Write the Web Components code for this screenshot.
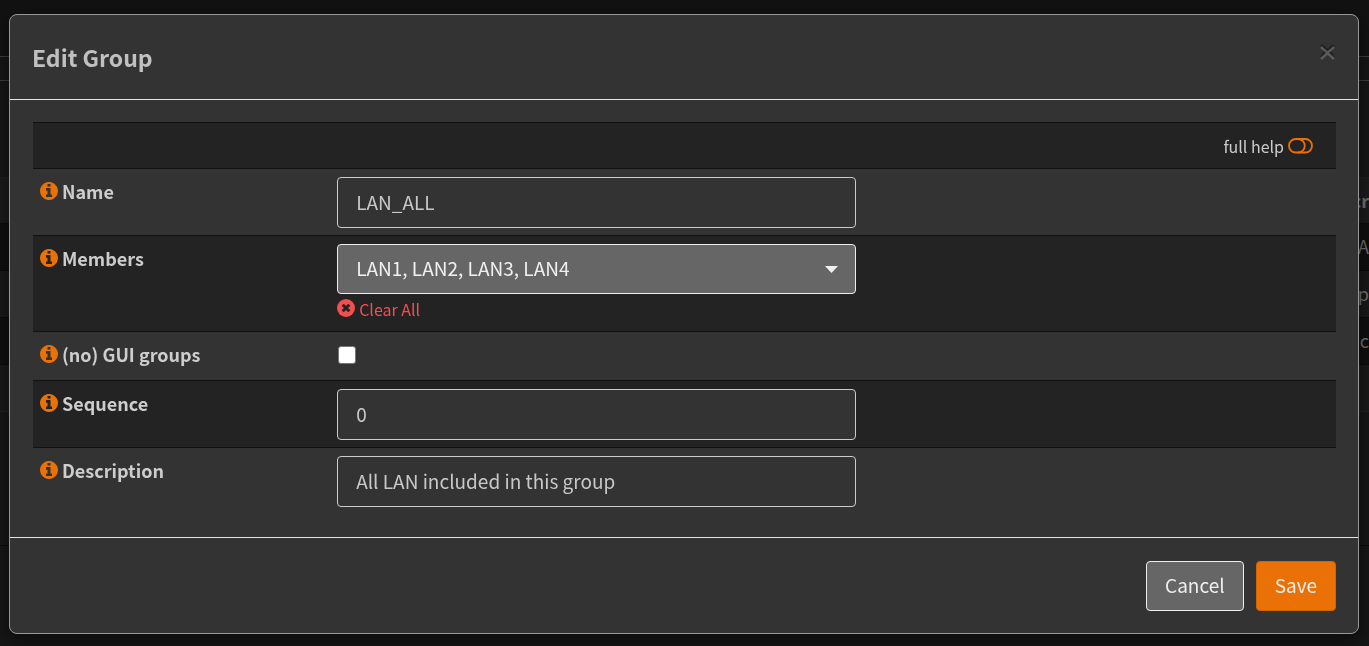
<!DOCTYPE html>
<html lang="en">
<head>
<meta charset="utf-8">
<meta name="viewport" content="width=device-width, initial-scale=1">
<title>Edit Group</title>
<style>
  body {
    margin: 0;
    min-height: 100vh;
    background: #151515;
    color: #cdcdcd;
    font: 18px/24px "Noto Sans CJK SC", "Noto Sans", sans-serif;
  }
</style>
</head>
<body>
<group-list-page></group-list-page>
<modal-dialog heading="Edit Group">
  <form-table>
    <help-row></help-row>
    <form-row label="Name"><text-field name="Name" value="LAN_ALL"></text-field></form-row>
    <form-row label="Members" shaded>
      <member-picker name="Members" value="LAN1, LAN2, LAN3, LAN4"></member-picker>
    </form-row>
    <form-row label="(no) GUI groups"><check-field name="(no) GUI groups"></check-field></form-row>
    <form-row label="Sequence" shaded><text-field name="Sequence" value="0"></text-field></form-row>
    <form-row label="Description"><text-field name="Description" value="All LAN included in this group"></text-field></form-row>
  </form-table>
  <action-button slot="actions">Cancel</action-button>
  <action-button slot="actions" primary>Save</action-button>
</modal-dialog>

<script>
const define = (name, render) => customElements.define(name, class extends HTMLElement {
  connectedCallback() {
    if (this.shadowRoot) return;
    this.attachShadow({ mode: 'open' }).innerHTML = render(this);
  }
});

/* Dimmed list page that stays behind the dialog */
define('group-list-page', () => `
  <style>
    :host { position: fixed; inset: 0; z-index: -1; overflow: hidden; display: block; color: #6f6f6f; background: #161616; }
    div { box-sizing: border-box; border-top: 1px solid #0a0a0a; text-align: right; }
    .top { height: 56px; border: 0; background: #121212; }
    .bar { height: 24px; border-color: #3c3c3c; }
    .title { height: 97px; border-color: #3c3c3c; }
    .head { height: 46px; border-color: #202020; background: #1b1b1b; font-weight: 700; line-height: 44px; }
    .row { height: 47px; line-height: 44px; }
    .odd { background: #0f0f0f; }
    .even { background: #191919; }
    .rest { height: 134px; border-color: #202020; }
    .foot { height: 100px; }
  </style>
  <div class="top"></div><div class="bar"></div><div class="title"></div>
  <div class="head">cr</div>
  <div class="row odd">A</div><div class="row even">p</div><div class="row odd">c</div>
  <div class="row even"></div><div class="rest"></div><div class="foot"></div>`);

define('modal-dialog', el => `
  <style>
    :host { display: block; padding: 14px 10px 12px 9px; }
    section { border: 1px solid #999; border-radius: 8px; background: #333; box-shadow: 0 6px 18px rgba(0,0,0,.5); }
    header { display: flex; justify-content: space-between; align-items: flex-start; padding: 21px 22px 21px; border-bottom: 1px solid #e5e5e5; }
    h1 { margin: 0; font-size: 23px; line-height: 42px; font-weight: 700; color: #c0c0c0; }
    .close { border: 0; padding: 0; margin: 7px 0 0; width: 18px; height: 20px; background: none; cursor: pointer; }
    svg { display: block; }
    main { padding: 22px 22px 23px 23px; }
    footer { display: flex; justify-content: flex-end; gap: 12px; padding: 23px 22px 22px; border-top: 1px solid #e5e5e5; }
  </style>
  <section role="dialog" aria-label="${el.getAttribute('heading')}">
    <header><h1>${el.getAttribute('heading')}</h1>
      <button class="close" aria-label="Close"><svg width="18" height="20" fill="none">
        <path d="M3 2l13 13M16 2L3 15" stroke="#202020" stroke-width="3"/><path d="M3 4l6.500 5.500L16 4M3 16l6.500-6 6.500 6" stroke="#5c5c5c" stroke-width="2.500"/><path d="M5 3l4.500 4L14 3M4 12l3-3M15 12l-3-3" stroke="#222" stroke-width="2"/></svg></button>
    </header>
    <main><slot></slot></main>
    <footer><slot name="actions"></slot></footer>
  </section>`);

define('form-table', () => `<style>:host { display: block; }</style><slot></slot>`);

define('help-row', () => `
  <style>
    :host { display: flex; justify-content: flex-end; border-top: 1px solid #111; background: #232323; padding: 11px 23px 10px; }
    a { display: flex; align-items: center; gap: 4px; color: #cdcdcd; font-size: 16px; line-height: 24px; text-decoration: none; }
  </style>
  <a href="#">full help <svg width="25" height="17" fill="none" stroke="#ea7105" stroke-width="1.800"><rect x="1" y="1" width="23" height="13.500" rx="6.750"/><path d="M10 1a6.750 6.750 0 0 1 0 13.500"/></svg></a>`);

define('form-row', el => `
  <style>
    :host { display: grid; grid-template-columns: minmax(0,5fr) minmax(0,9fr) minmax(0,8fr); border-top: 1px solid #111; }
    :host([shaded]) { background: #232323; }
    .label { display: flex; align-items: flex-start; gap: 4px; padding: 10px 7px; color: #cdcdcd; font-weight: 700; }
    a { display: block; padding-top: 3px; }
    svg { display: block; }
    .control { padding: 8px 6px 7px 8px; }
  </style>
  <div class="label"><a href="#" aria-label="Help"><svg width="18" height="18" viewBox="0 0 1536 1536"><path fill="#ea7105" d="M1024 1248v-160q0-14-9-23t-23-9h-96V544q0-14-9-23t-23-9H544q-14 0-23 9t-9 23v160q0 14 9 23t23 9h96v320h-96q-14 0-23 9t-9 23v160q0 14 9 23t23 9h448q14 0 23-9t9-23zM896 352V192q0-14-9-23t-23-9H672q-14 0-23 9t-9 23v160q0 14 9 23t23 9h192q14 0 23-9t9-23zm640 416q0 209-103 385.500T1153.500 1433 768 1536t-385.500-103T103 1153.500 0 768t103-385.500T382.500 103 768 0t385.500 103T1433 382.500 1536 768z"/></svg></a><span>${el.getAttribute('label')}</span></div>
  <div class="control"><slot></slot></div>`);

define('text-field', el => `
  <style>
    :host { display: block; }
    input { display: block; box-sizing: border-box; width: 100%; height: 51px; padding: 0 18px 2px; border: 1px solid #ccc; border-radius: 4px; background: #333; color: #c8c8c8; font: inherit; font-size: 19px; }
  </style>
  <input type="text" aria-label="${el.getAttribute('name')}" value="${el.getAttribute('value')}">`);

define('member-picker', el => `
  <style>
    :host { display: block; padding-bottom: 3px; }
    .box { display: grid; align-items: center; }
    select, .caret { grid-area: 1 / 1; }
    select { appearance: none; width: 100%; height: 50px; box-sizing: border-box; padding: 0 18px 2px; border: 1px solid #eee; border-radius: 4px; background: #666; color: #f0f0f0; font: inherit; font-size: 19px; }
    .caret { justify-self: end; margin-right: 18px; pointer-events: none; }
    a { display: flex; width: max-content; align-items: center; gap: 4px; margin-top: 3px; color: #f05050; font-size: 16px; line-height: 24px; text-decoration: none; }
  </style>
  <div class="box">
    <select aria-label="${el.getAttribute('name')}"><option>${el.getAttribute('value')}</option></select>
    <svg class="caret" width="13" height="7"><path d="M0 0h13L6.500 7z" fill="#f0f0f0"/></svg>
  </div>
  <a href="#"><svg width="18" height="20" viewBox="0 0 18 20"><circle cx="9" cy="9" r="9" fill="#f05050"/><path d="M5.700 5.700l6.600 6.600M12.300 5.700l-6.600 6.600" stroke="#232323" stroke-width="3"/></svg>Clear All</a>`);

define('check-field', el => `
  <style>
    :host { display: flex; align-items: flex-start; height: 27px; padding: 6px 1px 0; }
    input { appearance: none; box-sizing: border-box; width: 18px; height: 18px; margin: 0; border: 1px solid #767676; border-radius: 3px; background: #fff; }
    input:checked { background: #ea7105; }
  </style>
  <input type="checkbox" aria-label="${el.getAttribute('name')}">`);

define('action-button', () => `
  <style>
    :host { display: block; }
    button { display: block; height: 50px; padding: 0 18px 2px; border: 1px solid #eee; border-radius: 4px; background: #666; color: #eee; font: inherit; font-size: 19px; cursor: pointer; }
    :host([primary]) button { border-color: #d16504; background: #ea7105; }
  </style>
  <button type="button"><slot></slot></button>`);
</script>
</body>
</html>
